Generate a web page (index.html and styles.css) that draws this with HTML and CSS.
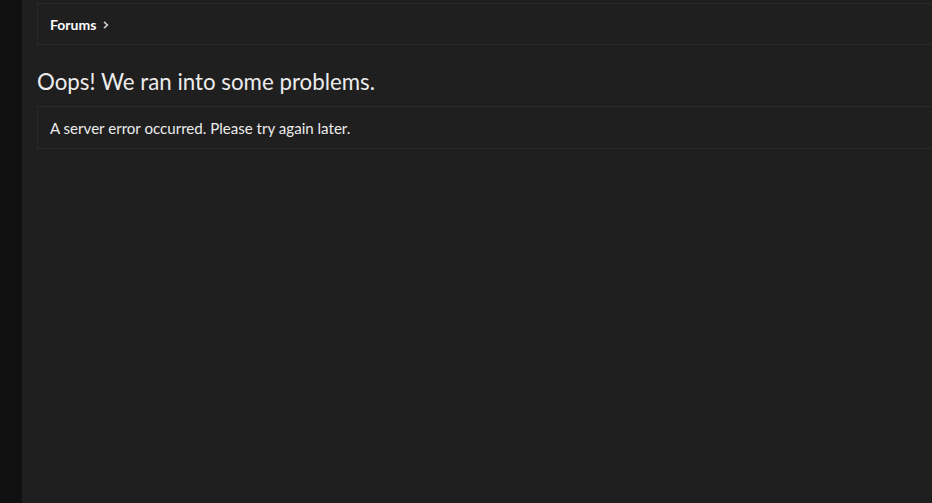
FILE: index.html
```html
<!DOCTYPE html>
<html lang="en">
<head>
<meta charset="utf-8">
<title>Oops! We ran into some problems.</title>
<link rel="stylesheet" href="styles.css">
</head>
<body>
<div class="page">
  <aside class="side"></aside>
  <main class="main">
    <nav class="crumbs">
      <a class="crumb" href="#">Forums</a>
      <svg class="chev" width="6" height="8" viewBox="0 0 6 8" aria-hidden="true"><path d="M1 0.8 L4.4 4 L1 7.2" fill="none" stroke="#cfcfcf" stroke-width="1.6"/></svg>
    </nav>
    <h1 class="title">Oops! We ran into some problems.</h1>
    <div class="block">A server error occurred. Please try again later.</div>
  </main>
</div>
</body>
</html>
```
FILE: styles.css
```css
html, body {
  margin: 0;
  padding: 0;
  height: 100%;
  background: #1f1f1f;
  overflow: hidden;
}
.page {
  display: flex;
  height: 100%;
  font-family: "Lato", "Noto Sans", sans-serif;
  color: #e6e6e6;
}
.side {
  width: 22px;
  flex: none;
  background: #111111;
}
.main {
  flex: 1;
  padding: 3px 0 0 15px;
  background: #1f1f1f;
  min-width: 0;
}
.crumbs {
  display: flex;
  align-items: center;
  height: 40px;
  border: 1px solid #2a2a2a;
  border-right: none;
  padding-left: 12px;
  box-sizing: content-box;
}
.crumb {
  color: #ffffff;
  font-weight: 700;
  font-size: 14px;
  text-decoration: none;
}
.chev {
  margin-left: 7px;
  margin-top: 1px;
}
.title {
  margin: 23px 0 0 0;
  font-size: 22.3px;
  font-weight: 400;
  line-height: 28px;
  color: #ececec;
}
.block {
  margin-top: 10px;
  border: 1px solid #2a2a2a;
  border-right: none;
  height: 41px;
  display: flex;
  align-items: center;
  padding-left: 12px;
  font-size: 15.1px;
  color: #ececec;
}
```
